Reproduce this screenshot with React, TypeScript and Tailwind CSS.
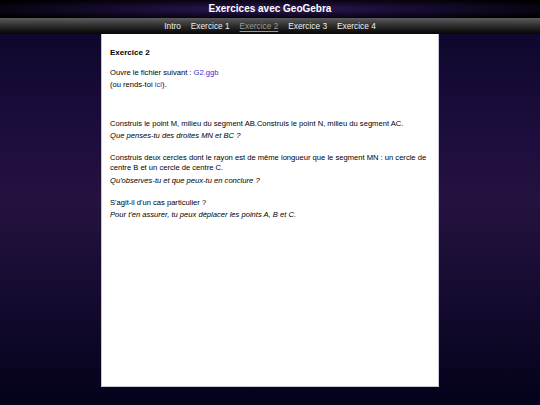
import React from "react";

const navItems = ["Intro", "Exercice 1", "Exercice 2", "Exercice 3", "Exercice 4"];

export default function App() {
  return (
    <div
      className="w-[540px] h-[405px] overflow-hidden flex flex-col bg-[linear-gradient(to_bottom,#0a0528_0%,#1e0e3e_35%,#24123f_50%,#140a2e_75%,#03021a_100%)]"
      style={{ fontFamily: '"Liberation Sans", Arial, sans-serif' }}
    >
      {/* Title */}
      <div className="h-[18px] flex items-center justify-center bg-[radial-gradient(ellipse_at_center,#2e1a55_0%,#150a2c_45%,#000000_90%)]">
        <h1 className="text-[10px] font-bold text-white leading-none">Exercices avec GeoGebra</h1>
      </div>

      {/* Nav */}
      <div className="h-[16px] flex items-center justify-center gap-[10px] bg-[linear-gradient(to_bottom,#5c5c5c_0%,#2c2c2c_50%,#050505_100%)]">
        {navItems.map((item) => (
          <span
            key={item}
            className={
              item === "Exercice 2"
                ? "text-[8.3px] leading-none text-[#9a9a9a] underline underline-offset-2"
                : "text-[8.3px] leading-none text-[#f0f0f0]"
            }
          >
            {item}
          </span>
        ))}
      </div>

      {/* Content */}
      <div className="w-[338px] h-[353px] ml-[101px] bg-white border border-[#c9c5d9] border-t-0 px-[8px] pt-[14px] text-[7.6px] leading-[10px] text-black">
        <h2 className="font-bold text-[8px] mb-[10px]">Exercice 2</h2>
        <p className="mb-[2px]">
          Ouvre le fichier suivant : <span className="text-[#3333cc]">G2.ggb</span>
        </p>
        <p className="mb-[29px]">
          (ou rends-toi <span className="text-[#3333cc]">ici</span>).
        </p>

        <p className="mb-[2px]">
          Construis le point M, milieu du segment AB.Construis le point N, milieu du segment AC.
        </p>
        <p className="italic mb-[12px]">Que penses-tu des droites MN et BC ?</p>

        <p className="mb-[3px]">
          Construis deux cercles dont le rayon est de même longueur que le segment MN : un cercle de centre B et un cercle de centre C.
        </p>
        <p className="italic mb-[12px]">Qu'observes-tu et que peux-tu en conclure ?</p>

        <p className="mb-[2px]">S'agit-il d'un cas particulier ?</p>
        <p className="italic">Pour t'en assurer, tu peux déplacer les points A, B et C.</p>
      </div>
    </div>
  );
}
